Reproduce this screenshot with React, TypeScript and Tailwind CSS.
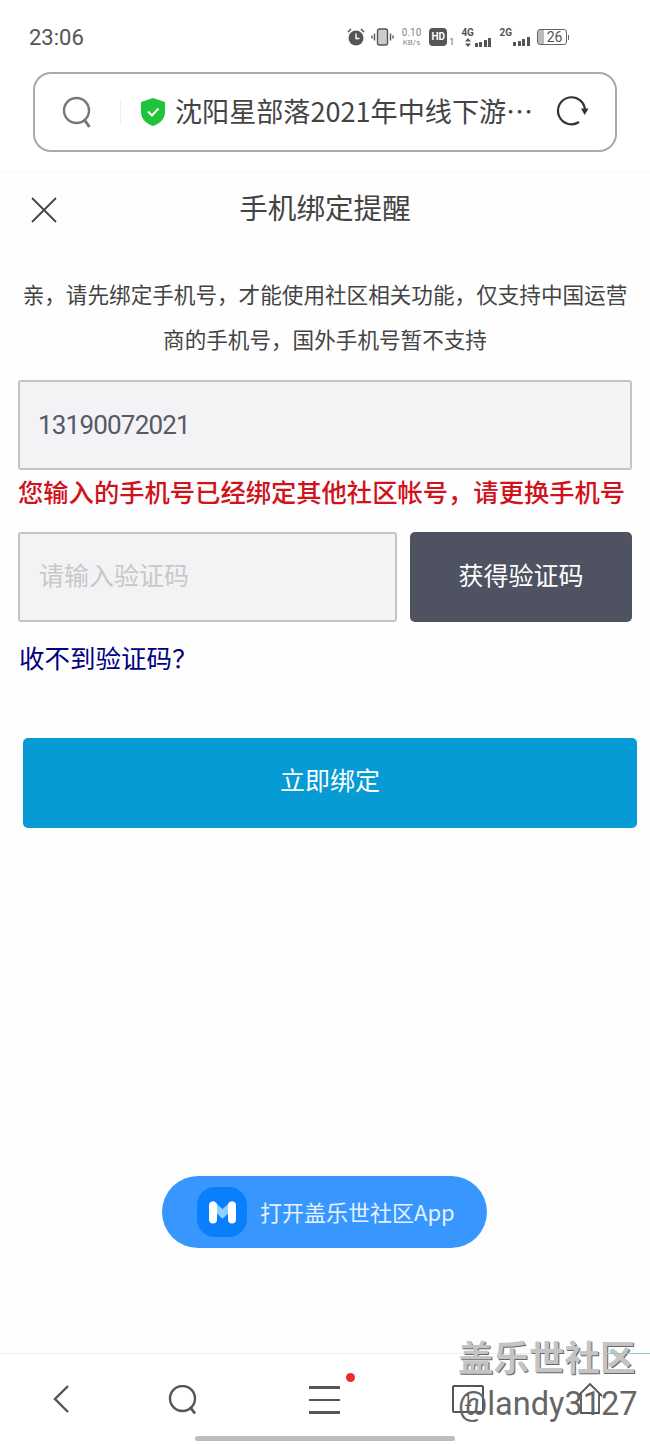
const FONT = "font-['Noto_Sans_CJK_SC','Noto_Sans',sans-serif]";

function SignalBars() {
  return (
    <span className="flex items-end gap-[1.5px]">
      <span className="h-[4px] w-[3px] bg-[#555]" />
      <span className="h-[5px] w-[3px] bg-[#555]" />
      <span className="h-[7px] w-[3px] bg-[#555]" />
      <span className="h-[9px] w-[3px] bg-[#555]" />
    </span>
  );
}

function StatusBar() {
  return (
    <div className="flex h-[72px] items-start justify-between pl-[29px] pr-[81px] pt-[24px]">
      <span className="font-['Roboto',sans-serif] text-[22px] leading-[28px] text-[#555]">23:06</span>
      <div className="flex items-center gap-[5px] pt-[3px] font-['Roboto',sans-serif] text-[#666]">
        <svg width="20" height="20" viewBox="0 0 20 20">
          <circle cx="10" cy="11" r="7.5" fill="#555" />
          <path d="M10 6.500V11.500H13.500" stroke="#fff" strokeWidth="1.400" fill="none" />
          <path d="M2 5 5 2M18 5 15 2" stroke="#555" strokeWidth="1.500" />
        </svg>
        <svg width="23" height="18" viewBox="0 0 23 18">
          <rect x="6.500" y="1" width="10" height="16" rx="2" fill="#ccc" stroke="#555" strokeWidth="1.400" />
          <path d="M3.500 5.500v7M1 7.500v3M19.500 5.500v7M22 7.500v3" stroke="#555" strokeWidth="1.400" />
        </svg>
        <span className="ml-[3px] flex flex-col items-center text-[10px] leading-[10px] text-[#888]">
          <span>0.10</span>
          <span className="text-[8px] leading-[9px]">KB/s</span>
        </span>
        <span className="ml-[3px] flex items-end">
          <span className="flex h-[18px] w-[18px] items-center justify-center rounded-[4px] bg-[#555] text-[10px] font-bold leading-none text-white">
            HD
          </span>
          <span className="ml-[2px] text-[9px] leading-[8px]">1</span>
        </span>
        <span className="ml-[2px] flex items-end gap-[1px]">
          <span className="flex flex-col items-center text-[10px] font-bold leading-[10px] text-[#555]">
            4G
            <svg width="6" height="9" viewBox="0 0 6 9">
              <path d="M3 0 6 3.500H0ZM3 9 0 5.500H6Z" fill="#555" />
            </svg>
          </span>
          <SignalBars />
        </span>
        <span className="ml-[3px] flex items-end gap-[1px]">
          <span className="mb-[8px] text-[10px] font-bold leading-[10px] text-[#555]">2G</span>
          <SignalBars />
        </span>
        <span className="ml-[2px] flex items-center">
          <span className="flex h-[16px] w-[30px] items-center justify-end rounded-[3px] border border-[#666] bg-[linear-gradient(90deg,#bbb_22%,#fff_22%)] pr-[3px] text-[14px] leading-none text-[#555]">
            26
          </span>
          <span className="ml-[1px] h-[5px] w-[1.500px] bg-[#666]" />
        </span>
      </div>
    </div>
  );
}

function AddressBar() {
  return (
    <div className="mx-[33px] flex h-[80px] items-center rounded-[18px] border-2 border-[#a9a9a9] bg-white">
      <svg width="34" height="34" viewBox="0 0 34 34" className="ml-[26px] shrink-0">
        <circle cx="15.500" cy="15.500" r="12.500" stroke="#777" strokeWidth="2.400" fill="none" />
        <path d="M23.500 25 28.500 32" stroke="#777" strokeWidth="3" />
      </svg>
      <span className="ml-[25px] h-[26px] w-px bg-[#eee]" />
      <svg width="26" height="30" viewBox="0 0 26 30" className="ml-[19px] shrink-0">
        <path d="M13 1 25 5V15C25 22 20 26.500 13 29 6 26.500 1 22 1 15V5Z" fill="#1fc43a" />
        <path d="M8 14.500 12 18.500 18.500 11.500" stroke="#fff" strokeWidth="2" fill="none" />
      </svg>
      <span className="ml-[9px] mb-[2px] w-[370px] whitespace-nowrap text-[27.100px] leading-none text-[#444]">
        沈阳星部落2021年中线下游…
      </span>
      <svg width="33" height="32" viewBox="0 0 33 32" className="ml-auto mr-[26px]">
        <path d="M23 26A13.500 13.500 0 1 1 29 15" stroke="#333" strokeWidth="2.200" fill="none" />
        <path d="M25 12.500H32.500L28.700 19Z" fill="#333" />
      </svg>
    </div>
  );
}

function BottomNav() {
  return (
    <div className="h-[91px] border-t border-[#f0f0f0] bg-white">
      <div className="flex h-[80px] items-start pt-[31px]">
        <svg width="16" height="28" viewBox="0 0 16 28" className="ml-[53px] shrink-0">
          <path d="M15 1 2 14 15 27" stroke="#555" strokeWidth="2.400" fill="none" />
        </svg>
        <svg width="30" height="29" viewBox="0 0 30 29" className="ml-[99px] shrink-0">
          <circle cx="14.500" cy="13.500" r="12.500" stroke="#555" strokeWidth="2.400" fill="none" />
          <path d="M22 22 27 28.500" stroke="#555" strokeWidth="2.800" />
        </svg>
        <div className="relative ml-[111px] mt-[1px] flex w-[31px] shrink-0 flex-col gap-[10px]">
          <span className="h-[2.500px] bg-[#555]" />
          <span className="h-[2.500px] bg-[#555]" />
          <span className="h-[2.500px] bg-[#555]" />
          <span className="absolute -right-[15px] -top-[13px] h-[9px] w-[9px] rounded-full bg-[#ee2a36]" />
        </div>
        <span className="ml-[112px] flex h-[28px] w-[32px] shrink-0 items-center justify-center rounded-[2px] border-2 border-[#555] text-[16px] leading-none text-[#555]">
          1
        </span>
        <svg width="26" height="32" viewBox="0 0 26 32" className="ml-[93px] mt-[-2px] shrink-0">
          <path d="M1 13 13 1 25 13M4 11V30H22V11" stroke="#555" strokeWidth="1.800" fill="none" />
        </svg>
      </div>
      <div className="mx-auto mt-[2px] h-[5px] w-[260px] rounded-full bg-[#bdbdbd]" />
    </div>
  );
}

export default function App() {
  return (
    <div className={`relative flex h-[1444px] w-[650px] flex-col overflow-hidden bg-white ${FONT}`}>
      <StatusBar />
      <AddressBar />
      <div className="mt-[20px] flex min-h-0 flex-1 flex-col border-t border-[#f7f7f7] bg-[#fefefe]">
        <div className="relative h-[72px]">
          <svg width="26" height="26" viewBox="0 0 26 26" className="absolute left-[31px] top-[24px]">
            <path d="M1 1 25 25M25 1 1 25" stroke="#444" strokeWidth="1.800" />
          </svg>
          <h1 className="pt-[14px] text-center text-[28.600px] font-normal leading-[40px] text-[#444]">
            手机绑定提醒
          </h1>
        </div>
        <p className="mt-[26px] px-[18px] text-center text-[21.600px] leading-[45px] text-[#444]">
          亲，请先绑定手机号，才能使用社区相关功能，仅支持中国运营商的手机号，国外手机号暂不支持
        </p>
        <div className="mx-[18px] mt-[19px] flex h-[90px] items-center rounded-[3px] border-2 border-[#c4c4c4] bg-[#f3f2f5] pl-[18px] font-['Roboto',sans-serif] text-[26px] tracking-[-0.8px] text-[#555a66]">
          13190072021
        </div>
        <p className="ml-[18px] mt-[3px] whitespace-nowrap text-[25.300px] font-medium leading-[36px] text-[#d0121b]">
          您输入的手机号已经绑定其他社区帐号，请更换手机号
        </p>
        <div className="mx-[18px] mt-[23px] flex h-[90px] gap-[13px]">
          <div className="flex w-[379px] items-center rounded-[3px] border-2 border-[#c4c4c4] bg-[#f3f2f5] pb-[5px] pl-[19px] text-[25px] text-[#c8c8c8]">
            请输入验证码
          </div>
          <button className="flex-1 rounded-[5px] bg-[#4f5260] pb-[5px] text-[25px] text-white">获得验证码</button>
        </div>
        <a className="ml-[19px] mt-[17px] text-[25.500px] leading-[36px] text-[#000080]">收不到验证码？</a>
        <button className="ml-[23px] mt-[63px] h-[90px] w-[614px] rounded-[5px] bg-[#069bd4] pb-[6px] text-[25px] text-white">
          立即绑定
        </button>
      </div>
      <BottomNav />

      {/* floating open-app pill */}
      <div className="absolute left-[162px] top-[1176px] flex h-[72px] w-[325px] items-center rounded-full bg-[#3797ff]">
        <div className="ml-[35px] flex h-[50px] w-[50px] items-center justify-center rounded-[18px] bg-[#0a7ffb]">
          <svg width="27" height="23" viewBox="0 0 27 23">
            <path d="M4 4 13.500 13 23 4" stroke="#8fd0ff" strokeWidth="7" strokeLinecap="round" fill="none" />
            <path d="M4 4.500V18.500M23 4.500V18.500" stroke="#fff" strokeWidth="8" strokeLinecap="round" fill="none" />
          </svg>
        </div>
        <span className="ml-[13px] mb-[2px] whitespace-nowrap text-[22px] leading-none text-[#e4f1ff]">
          打开盖乐世社区App
        </span>
      </div>

      {/* community watermark */}
      <div className="absolute left-[451px] top-[1336px] h-[80px] w-[199px]">
        <div className="absolute left-[7px] top-0 whitespace-nowrap text-[35.500px] font-bold leading-[40px] text-[#c4c4c4] [text-shadow:1px_1px_0_#666]">
          盖乐世社区
        </div>
        <div className="absolute left-[152px] top-[17px] h-px w-[47px] bg-[#9cc6cf]" />
        <div className="absolute left-[7px] top-[50px] whitespace-nowrap font-['Roboto',sans-serif] text-[32.500px] leading-[36px] text-[#666]">
          @landy3127
        </div>
      </div>
    </div>
  );
}
